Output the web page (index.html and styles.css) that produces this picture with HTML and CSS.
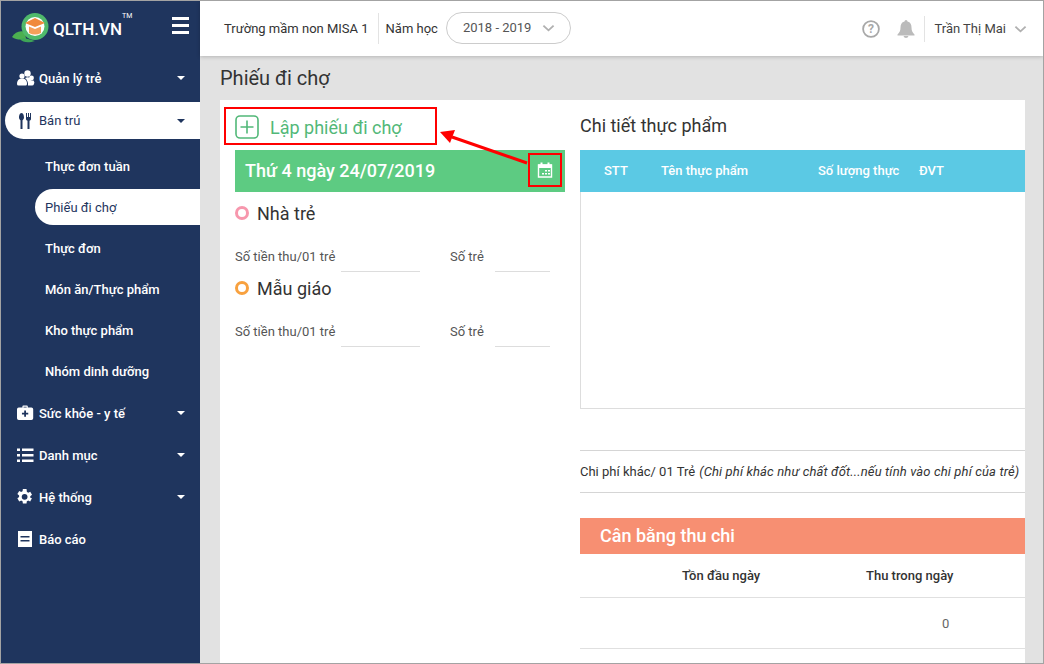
FILE: index.html
```html
<!DOCTYPE html>
<html lang="vi">
<head>
  <meta charset="UTF-8" />
  <title>Phiếu đi chợ</title>
  <link rel="stylesheet" href="styles.css">
</head>
<body>
  <div class="app">
    <aside class="sidebar">
      <div class="brand">
        <svg class="logo" viewBox="0 0 38 30" width="38" height="30">
          <path d="M1 24 C4 19 9 17 14 19 L15 26 C10 27 5 27 1 24Z" fill="#4caf50"/>
          <path d="M9 26 C13 24 18 26 24 28 C18 30 12 30 9 26Z" fill="#3ea657"/>
          <circle cx="24" cy="13.500" r="13.500" fill="#4fb96b"/>
          <circle cx="24" cy="13.500" r="9.500" fill="#fff"/>
          <path d="M24 5 L34 10 L24 14 L14 10Z" fill="#f08a3c"/>
          <path d="M18 13.500 L24 16 L30 13.500 L30 20 Q24 23 18 20Z" fill="#f5a05a"/>
        </svg>
        <span class="brand-name">QLTH.VN</span>
        <span class="brand-tm">TM</span>
        <div class="burger"><i></i><i></i><i></i></div>
      </div>

      <a class="item">
        <svg class="icon" viewBox="0 0 18 16"><circle cx="10.500" cy="3.500" r="3.200"/><circle cx="5" cy="6" r="2.600"/><circle cx="14.500" cy="8" r="2.400"/><path d="M0 14 C0 9.500 3 8.500 5 8.500 C8 8.500 10 10 10 14 Q10 15.500 8.500 15.500 H1.500 Q0 15.500 0 14Z"/><path d="M8 8 Q11 6.500 13 8 Q13 11 16.500 10.500 Q18 12 17 14 Q16.500 15.500 15 15.500 H11 Q11.500 11 8 8Z"/></svg>
        <span>Quản lý trẻ</span><b class="caret"></b>
      </a>
      <a class="item active">
        <svg class="icon" viewBox="0 0 18 16"><path d="M4.500 0 C6.500 0 7 3 7 4.500 C7 6 6 7 5.500 7.300 V16 H3.500 V7.300 C3 7 2 6 2 4.500 C2 3 2.500 0 4.500 0Z"/><path d="M9 0 H10 V4 H11 V0 H12 V4 H13 V0 H14 V6 C14 7 13 7.500 12.500 7.800 V16 H10.500 V7.800 C10 7.500 9 7 9 6Z"/></svg>
        <span>Bán trú</span><b class="caret"></b>
      </a>
      <div class="sub">
        <a class="sub-item">Thực đơn tuần</a>
        <a class="sub-item current">Phiếu đi chợ</a>
        <a class="sub-item">Thực đơn</a>
        <a class="sub-item">Món ăn/Thực phẩm</a>
        <a class="sub-item">Kho thực phẩm</a>
        <a class="sub-item">Nhóm dinh dưỡng</a>
      </div>
      <a class="item">
        <svg class="icon" viewBox="0 0 20 16.500" preserveAspectRatio="xMinYMid"><path d="M6 2 V1 Q6 0 7 0 H11 Q12 0 12 1 V2 H16 Q18 2 18 4 V14 Q18 16 16 16 H2 Q0 16 0 14 V4 Q0 2 2 2Z M7.300 2 H10.700 V1.300 H7.300Z M8 5.500 V8 H5.500 V10 H8 V12.500 H10 V10 H12.500 V8 H10 V5.500Z" fill-rule="evenodd"/></svg>
        <span>Sức khỏe - y tế</span><b class="caret"></b>
      </a>
      <a class="item">
        <svg class="icon" viewBox="0 0 18 16"><path d="M0 1.500 H3 V4 H0Z M5 1.500 H16.500 V4 H5Z M0 7 H3 V9.500 H0Z M5 7 H16.500 V9.500 H5Z M0 12.500 H3 V15 H0Z M5 12.500 H16.500 V15 H5Z"/></svg>
        <span>Danh mục</span><b class="caret"></b>
      </a>
      <a class="item">
        <svg class="icon" viewBox="2 1.500 21 21" preserveAspectRatio="xMinYMid"><path d="M19.400 13 a7.500 7.500 0 0 0 0-2 l2.300-1.800 -2.300-4 -2.700 1.100 a7.500 7.500 0 0 0-1.700-1 L14.500 1.500 h-4.800 L9.300 4.300 a7.500 7.500 0 0 0-1.700 1 L4.900 4.200 2.500 8.200 4.800 10 a7.500 7.500 0 0 0 0 2 l-2.300 1.800 2.400 4 2.700-1.100 a7.500 7.500 0 0 0 1.700 1 l.4 2.800 h4.800 l.4-2.800 a7.500 7.500 0 0 0 1.700-1 l2.700 1.100 2.300-4Z M12 15.500 a3.800 3.800 0 1 1 0-7.600 3.800 3.800 0 0 1 0 7.600Z" fill-rule="evenodd"/></svg>
        <span>Hệ thống</span><b class="caret"></b>
      </a>
      <a class="item">
        <svg class="icon" viewBox="0 0 18 16"><path d="M1 0 H15 V16 H1Z M3.500 5 V6.500 H12.500 V5Z M3.500 9 V10.500 H12.500 V9Z" fill-rule="evenodd"/></svg>
        <span>Báo cáo</span>
      </a>
    </aside>

    <div class="main">
      <header class="topbar">
        <span class="school">Trường mầm non MISA 1</span>
        <span class="year-label">Năm học</span>
        <div class="year-select">
          <span>2018 - 2019</span>
          <svg class="chev" viewBox="0 0 14 8" width="13" height="8"><path d="M1.500 1.500 L7 6.500 L12.500 1.500"/></svg>
        </div>
        <div class="top-right">
          <svg class="help" viewBox="0 0 18 18" width="18" height="18"><circle cx="9" cy="9" r="7.900"/><text x="9" y="13" text-anchor="middle">?</text></svg>
          <svg class="bell" viewBox="0 0 18 18" width="18" height="18"><path d="M9 0 Q10.500 0 10.500 1.500 C13.500 2.300 14.500 4.500 14.500 7.500 C14.500 11 15.500 12.500 17.500 14.500 V15.500 H.5 V14.500 C2.500 12.500 3.500 11 3.500 7.500 C3.500 4.500 4.500 2.300 7.500 1.500 Q7.500 0 9 0Z M6.500 16 H11.500 Q11 18 9 18 Q7 18 6.500 16Z"/></svg>
          <span class="user">Trần Thị Mai</span>
          <svg class="chev" viewBox="0 0 14 8" width="13" height="8"><path d="M1.500 1.500 L7 6.500 L12.500 1.500"/></svg>
        </div>
      </header>

      <div class="content">
        <h1 class="page-title">Phiếu đi chợ</h1>
        <div class="panel">
          <section class="left">
            <div class="add-row">
              <svg class="add-icon" viewBox="0 0 24 24" width="24" height="24"><rect x="1" y="1" width="22" height="22" rx="4"/><path d="M12 5.500 V18.500 M5.500 12 H18.500"/></svg>
              <span>Lập phiếu đi chợ</span>
            </div>
            <div class="date-bar">
              <span>Thứ 4 ngày 24/07/2019</span>
              <svg viewBox="0 0 16 16" width="16" height="16"><path d="M1.500 3 H14.500 V15 H1.500Z" fill="none" stroke="#fff" stroke-width="1.400"/><path d="M1 2.500 H15 V6 H1Z M3.500 .5 H5.500 V3 H3.500Z M10.500 .5 H12.500 V3 H10.500Z M8 8 H10 V9.500 H8Z M11 8 H13 V9.500 H11Z M5 11 H7 V12.500 H5Z M8 11 H10 V12.500 H8Z M11 11 H13 V12.500 H11Z" fill="#fff"/></svg>
            </div>
            <div class="group-title"><i class="dot pink"></i>Nhà trẻ</div>
            <div class="fields">
              <label class="field-label">Số tiền thu/01 trẻ</label><span class="input wide"></span>
              <label class="field-label second">Số trẻ</label><span class="input"></span>
            </div>
            <div class="group-title"><i class="dot orange"></i>Mẫu giáo</div>
            <div class="fields">
              <label class="field-label">Số tiền thu/01 trẻ</label><span class="input wide"></span>
              <label class="field-label second">Số trẻ</label><span class="input"></span>
            </div>
          </section>

          <section class="right">
            <h2 class="detail-title">Chi tiết thực phẩm</h2>
            <div class="food-head">
              <span class="c-stt">STT</span>
              <span class="c-name">Tên thực phẩm</span>
              <span class="c-qty">Số lượng thực</span>
              <span>ĐVT</span>
            </div>
            <div class="food-body"></div>
            <div class="cost-row">Chi phí khác/ 01 Trẻ <em>(Chi phí khác như chất đốt...nếu tính vào chi phí của trẻ)</em></div>
            <div class="balance-bar">Cân bằng thu chi</div>
            <div class="balance-head">
              <span class="b-open">Tồn đầu ngày</span>
              <span class="b-in">Thu trong ngày</span>
            </div>
            <div class="balance-row"><span>0</span></div>
          </section>
        </div>
      </div>
    </div>

    <!-- red marks added on top of the screenshot -->
    <div class="mark mark-add"></div>
    <div class="mark mark-cal"></div>
    <svg class="mark-arrow" viewBox="0 0 90 40" width="90" height="40">
      <path d="M12 11 L87 37" stroke="#f00" stroke-width="3" fill="none"/>
      <path d="M0 6 L15 4 L10 17Z" fill="#f00"/>
    </svg>
  </div>
</body>
</html>
```

FILE: styles.css
```css
* {
  box-sizing: border-box;
}

body {
  margin: 0;
  font-family: Roboto, sans-serif;
  color: #333;
}

.app {
  position: relative;
  display: flex;
  width: 1044px;
  height: 664px;
  border: 1px solid #a3a3a3;
  overflow: hidden;
}

.sidebar {
  width: 199px;
  flex-shrink: 0;
  background: #1f355e;
  color: #fff;
}

.brand {
  position: relative;
  display: flex;
  align-items: center;
  height: 56px;
  padding-left: 10px;
}

.logo {
  margin-top: -2px;
}

.brand-name {
  margin-left: 4px;
  font-size: 17px;
  line-height: 1;
  font-weight: 500;
}

.brand-tm {
  position: absolute;
  left: 121px;
  top: 12px;
  font-size: 7px;
  line-height: 1;
}

.burger {
  position: absolute;
  left: 171px;
  top: 16px;
  width: 17px;
}

.burger i {
  display: block;
  height: 3px;
  margin-bottom: 4px;
  background: #fff;
}

.item {
  display: flex;
  align-items: center;
  height: 42px;
  padding-left: 16px;
  font-size: 13px;
  font-weight: 500;
}

.icon {
  width: 18px;
  height: 16px;
  margin-right: 4px;
  fill: #fff;
  flex-shrink: 0;
}

.caret {
  margin-left: auto;
  margin-right: 15px;
  border-left: 4px solid transparent;
  border-right: 4px solid transparent;
  border-top: 4px solid #fff;
}

.item.active {
  height: 37px;
  margin: 3px 0 2px 4px;
  padding-left: 12px;
  border-radius: 19px 0 0 19px;
  background: #fff;
  color: #1f355e;
  font-weight: 400;
}

.item.active .icon {
  fill: #1f355e;
}

.item.active .caret {
  border-top-color: #1f355e;
}

.sub {
  padding: 5px 0 0 34px;
}

.sub-item {
  display: flex;
  align-items: center;
  height: 41px;
  padding-left: 10px;
  font-size: 13px;
  font-weight: 500;
}

.sub-item.current {
  height: 36px;
  margin: 2px 0 3px;
  border-radius: 18px 0 0 18px;
  background: #fff;
  color: #1f355e;
  font-weight: 400;
}

.main {
  flex: 1;
  display: flex;
  flex-direction: column;
  min-width: 0;
  background: #e2e2e2;
}

.topbar {
  display: flex;
  align-items: center;
  flex-shrink: 0;
  height: 55px;
  padding-left: 24px;
  background: #fff;
  box-shadow: 0 1px 4px rgba(0, 0, 0, 0.2);
  font-size: 13px;
}

.school {
  padding-right: 9px;
  line-height: 31px;
  border-right: 1px solid #e3e3e3;
}

.year-label {
  margin-left: 7px;
}

.year-select {
  display: flex;
  align-items: center;
  justify-content: space-between;
  width: 125px;
  height: 32px;
  margin: -2px 0 0 8px;
  padding: 0 15px 0 16px;
  border: 1px solid #ccc;
  border-radius: 16px;
  color: #555;
}

.chev {
  fill: none;
  stroke: #b0b0b0;
  stroke-width: 2;
}

.top-right {
  display: flex;
  align-items: center;
  margin-left: auto;
  padding-right: 16px;
}

.help {
  margin-right: 17px;
}

.help circle {
  fill: none;
  stroke: #a8a8a8;
  stroke-width: 1.800;
}

.help text {
  fill: #a8a8a8;
  font-size: 12px;
  font-weight: 700;
}

.bell {
  margin-right: 9px;
  fill: #bbb;
}

.user {
  height: 26px;
  line-height: 26px;
  padding-left: 9px;
  margin-right: 8px;
  border-left: 1px solid #e3e3e3;
  color: #444;
}

.content {
  flex: 1;
  display: flex;
  flex-direction: column;
  min-height: 0;
  padding: 0 18px 0 20px;
}

.page-title {
  margin: 0;
  height: 44px;
  line-height: 44px;
  font-size: 20px;
  font-weight: 400;
}

.panel {
  flex: 1;
  display: flex;
  min-height: 0;
  background: #fff;
}

.left {
  width: 360px;
  flex-shrink: 0;
  padding: 0 15px;
}

.add-row {
  display: flex;
  align-items: center;
  height: 50px;
  padding-top: 4px;
  color: #52b878;
  font-size: 18px;
}

.add-row span {
  margin-left: 11px;
}

.add-icon {
  fill: none;
  stroke: #52b878;
  stroke-width: 1.600;
}

.date-bar {
  display: flex;
  align-items: center;
  justify-content: space-between;
  height: 42px;
  margin-bottom: 6px;
  padding: 0 12px 2px 10px;
  background: #5dcb82;
  color: #fff;
  font-size: 18px;
  font-weight: 500;
}

.group-title {
  display: flex;
  align-items: center;
  height: 30px;
  font-size: 18px;
  color: #333;
}

.dot {
  width: 14px;
  height: 14px;
  margin-right: 8px;
  border: 3.500px solid;
  border-radius: 50%;
}

.dot.pink {
  border-color: #f797ad;
}

.dot.orange {
  border-color: #f8a13f;
}

.fields {
  display: flex;
  align-items: center;
  height: 45px;
  padding-top: 11px;
  font-size: 13px;
  color: #555;
}

.field-label {
  width: 106px;
}

.field-label.second {
  width: 45px;
  margin-left: 30px;
}

.input {
  width: 55px;
  height: 30px;
  margin-top: 1px;
  border-bottom: 1px solid #ddd;
}

.input.wide {
  width: 79px;
}

.right {
  flex: 1;
  min-width: 0;
  overflow: hidden;
}

.detail-title {
  margin: 0;
  height: 50px;
  padding-top: 4px;
  line-height: 44px;
  font-size: 18px;
  font-weight: 400;
}

.food-head {
  display: flex;
  align-items: center;
  height: 42px;
  padding-bottom: 2px;
  background: #5bc9e4;
  color: #fff;
  font-size: 13px;
  font-weight: 500;
}

.c-stt {
  margin-left: 24px;
  width: 57px;
}

.c-name {
  width: 157px;
}

.c-qty {
  width: 101px;
}

.food-body {
  height: 217px;
  border-left: 1px solid #ddd;
  border-bottom: 1px solid #ddd;
}

.cost-row {
  display: flex;
  align-items: center;
  gap: 4px;
  height: 43px;
  margin-top: 41px;
  border-top: 1px solid #d5d5d5;
  border-bottom: 1px solid #d5d5d5;
  font-size: 13px;
  white-space: nowrap;
}

.cost-row em {
  letter-spacing: 0.14px;
}

.balance-bar {
  height: 36px;
  margin-top: 25px;
  padding-left: 20px;
  line-height: 36px;
  background: #f78f72;
  color: #fff;
  font-size: 18px;
  font-weight: 500;
}

.balance-head {
  display: flex;
  align-items: center;
  height: 44px;
  border-bottom: 1px solid #e0e0e0;
  font-size: 13px;
  font-weight: 500;
  color: #333;
}

.b-open {
  margin-left: 102px;
  width: 184px;
}

.balance-row {
  height: 51px;
  padding-left: 362px;
  line-height: 51px;
  border-bottom: 1px solid #e0e0e0;
  font-size: 13px;
  color: #666;
}

.mark {
  position: absolute;
  border: 2px solid #f00;
}

.mark-add {
  left: 223px;
  top: 106px;
  width: 213px;
  height: 38px;
}

.mark-cal {
  left: 527px;
  top: 152px;
  width: 34px;
  height: 34px;
}

.mark-arrow {
  position: absolute;
  left: 439px;
  top: 125px;
}
```
